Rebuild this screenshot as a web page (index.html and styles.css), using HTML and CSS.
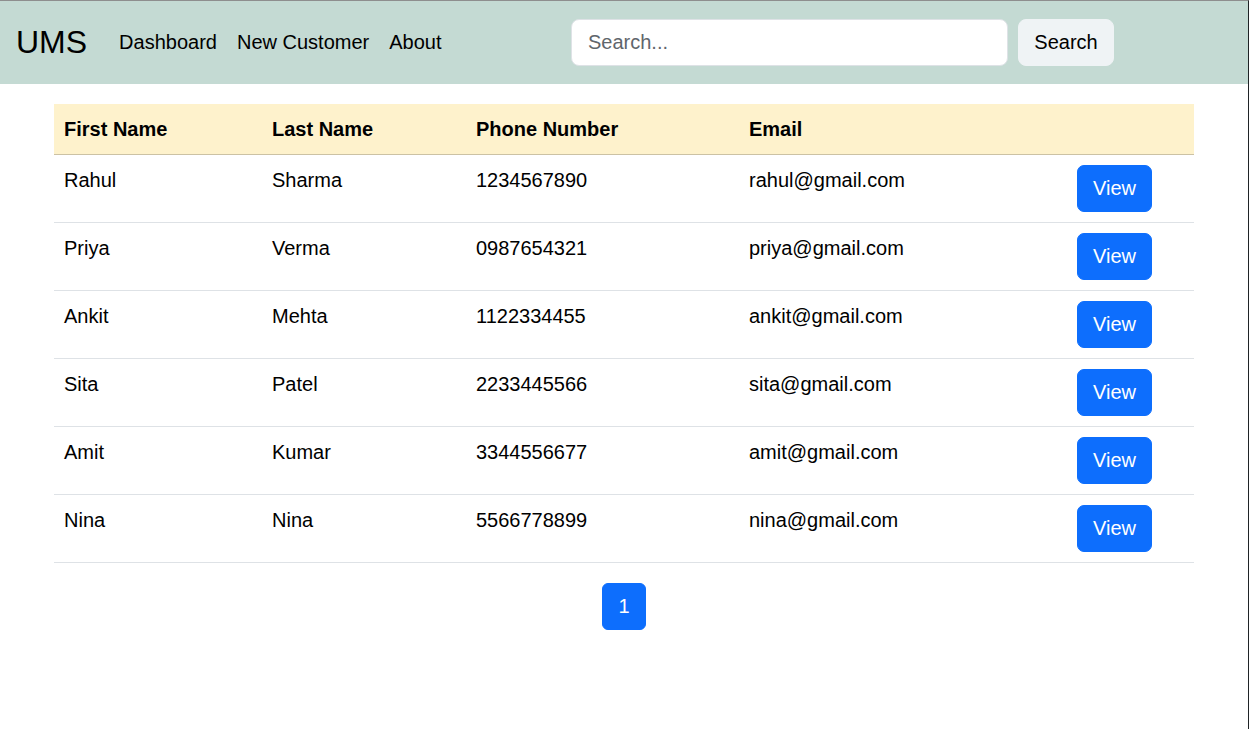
FILE: index.html
```html
<!DOCTYPE html>
<html lang="en">
<head>
<meta charset="utf-8">
<title>UMS</title>
<link rel="stylesheet" href="styles.css">
</head>
<body>
<nav class="navbar">
  <a class="brand" href="#">UMS</a>
  <ul class="nav-links">
    <li><a href="#">Dashboard</a></li>
    <li><a href="#">New Customer</a></li>
    <li><a href="#">About</a></li>
  </ul>
  <form class="search-form">
    <input class="search-input" type="search" placeholder="Search...">
    <button class="search-btn" type="button">Search</button>
  </form>
</nav>
<main class="container">
  <table class="customers">
    <thead>
      <tr>
        <th class="c1">First Name</th>
        <th class="c2">Last Name</th>
        <th class="c3">Phone Number</th>
        <th class="c4">Email</th>
        <th class="c5"></th>
      </tr>
    </thead>
    <tbody>
      <tr><td>Rahul</td><td>Sharma</td><td>1234567890</td><td>rahul@gmail.com</td><td><button class="btn-primary">View</button></td></tr>
      <tr><td>Priya</td><td>Verma</td><td>0987654321</td><td>priya@gmail.com</td><td><button class="btn-primary">View</button></td></tr>
      <tr><td>Ankit</td><td>Mehta</td><td>1122334455</td><td>ankit@gmail.com</td><td><button class="btn-primary">View</button></td></tr>
      <tr><td>Sita</td><td>Patel</td><td>2233445566</td><td>sita@gmail.com</td><td><button class="btn-primary">View</button></td></tr>
      <tr><td>Amit</td><td>Kumar</td><td>3344556677</td><td>amit@gmail.com</td><td><button class="btn-primary">View</button></td></tr>
      <tr><td>Nina</td><td>Nina</td><td>5566778899</td><td>nina@gmail.com</td><td><button class="btn-primary">View</button></td></tr>
    </tbody>
  </table>
  <div class="pagination">
    <button class="btn-primary page">1</button>
  </div>
</main>
</body>
</html>
```
FILE: styles.css
```css
* { box-sizing: border-box; }

html, body { height: 100%; }

body {
  margin: 0;
  font-family: "Liberation Sans", Arial, sans-serif;
  font-size: 20px;
  line-height: 1.5;
  color: #212529;
  background: #fff;
  border-top: 1px solid #8e8e8e;
  border-right: 1px solid #1f2326;
}

.navbar {
  height: 83px;
  background: #c4dad3;
  display: flex;
  align-items: center;
  padding: 0 134px 1px 16px;
}

.brand {
  font-size: 32px;
  color: #000;
  text-decoration: none;
  margin-right: 22px;
  line-height: 1.5;
}

.nav-links {
  list-style: none;
  margin: 0;
  padding: 0;
  display: flex;
}

.nav-links a {
  display: block;
  padding: 8px 10px;
  color: #000;
  text-decoration: none;
  font-size: 20px;
}

.search-form {
  margin-left: auto;
  display: flex;
  gap: 10px;
}

.search-input {
  width: 437px;
  height: 47px;
  padding: 8px 16px;
  font: inherit;
  font-size: 20px;
  border: 1px solid #dee2e6;
  border-radius: 8px;
  background: #fff;
  color: #212529;
}

.search-input::placeholder { color: #5f666c; }

.search-btn {
  width: 96px;
  height: 47px;
  padding: 0;
  font: inherit;
  font-size: 20px;
  color: #000;
  background: #eff3f5;
  border: 1px solid #eff3f5;
  border-radius: 8px;
}

.container {
  width: 1140px;
  margin: 20px auto 0;
}

.customers {
  width: 100%;
  border-collapse: collapse;
  table-layout: fixed;
}

.c1 { width: 208px; }
.c2 { width: 204px; }
.c3 { width: 273px; }
.c4 { width: 328px; }
.c5 { width: 127px; }

.customers th,
.customers td {
  padding: 10px;
  text-align: left;
  vertical-align: top;
  line-height: 30px;
  font-size: 20px;
  border-bottom: 1px solid #dee2e6;
}

.customers thead th {
  background: #fef2cc;
  color: #000;
  font-weight: bold;
  border-bottom: 1px solid #ccc2a4;
}

.customers td { color: #000; }

.btn-primary {
  display: inline-block;
  width: 75px;
  height: 47px;
  padding: 0;
  font: inherit;
  font-size: 20px;
  line-height: 45px;
  color: #fff;
  background: #0d6efd;
  border: 1px solid #0d6efd;
  border-radius: 7px;
  vertical-align: top;
}

.pagination {
  display: flex;
  justify-content: center;
  padding-top: 20px;
}

.page {
  width: 44px;
  height: 47px;
  padding: 0;
  border-radius: 6px;
}
```
